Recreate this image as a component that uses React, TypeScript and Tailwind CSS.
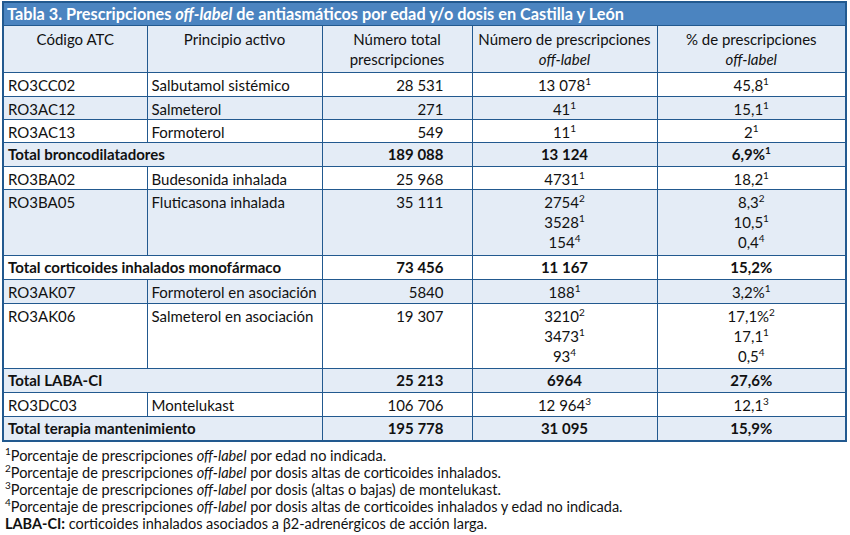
import React from "react";

const B = "border border-[#22598f]";

function Sup({ n }: { n: string }) {
  return <sup className="text-[10px] -top-[6px] leading-none">{n}</sup>;
}

type Row =
  | { kind: "item"; code: string; name: string; total: string; nums: [string, string][]; pcts: [string, string][]; light: boolean; h: string }
  | { kind: "total"; label: string; total: string; num: string; pct: [string, string]; light: boolean };

const rows: Row[] = [
  { kind: "item", code: "RO3CC02", name: "Salbutamol sistémico", total: "28 531", nums: [["13 078", "1"]], pcts: [["45,8", "1"]], light: false, h: "h-[24px]" },
  { kind: "item", code: "RO3AC12", name: "Salmeterol", total: "271", nums: [["41", "1"]], pcts: [["15,1", "1"]], light: true, h: "h-[23px]" },
  { kind: "item", code: "RO3AC13", name: "Formoterol", total: "549", nums: [["11", "1"]], pcts: [["2", "1"]], light: false, h: "h-[23px]" },
  { kind: "total", label: "Total broncodilatadores", total: "189 088", num: "13 124", pct: ["6,9%", "1"], light: true },
  { kind: "item", code: "RO3BA02", name: "Budesonida inhalada", total: "25 968", nums: [["4731", "1"]], pcts: [["18,2", "1"]], light: false, h: "h-[23px]" },
  { kind: "item", code: "RO3BA05", name: "Fluticasona inhalada", total: "35 111", nums: [["2754", "2"], ["3528", "1"], ["154", "4"]], pcts: [["8,3", "2"], ["10,5", "1"], ["0,4", "4"]], light: true, h: "h-[66px]" },
  { kind: "total", label: "Total corticoides inhalados monofármaco", total: "73 456", num: "11 167", pct: ["15,2%", ""], light: false },
  { kind: "item", code: "RO3AK07", name: "Formoterol en asociación", total: "5840", nums: [["188", "1"]], pcts: [["3,2%", "1"]], light: true, h: "h-[24px]" },
  { kind: "item", code: "RO3AK06", name: "Salmeterol en asociación", total: "19 307", nums: [["3210", "2"], ["3473", "1"], ["93", "4"]], pcts: [["17,1%", "2"], ["17,1", "1"], ["0,5", "4"]], light: false, h: "h-[65px]" },
  { kind: "total", label: "Total LABA-CI", total: "25 213", num: "6964", pct: ["27,6%", ""], light: true },
  { kind: "item", code: "RO3DC03", name: "Montelukast", total: "106 706", nums: [["12 964", "3"]], pcts: [["12,1", "3"]], light: false, h: "h-[24px]" },
  { kind: "total", label: "Total terapia mantenimiento", total: "195 778", num: "31 095", pct: ["15,9%", ""], light: true },
];

export default function App() {
  return (
    <div className="w-[850px] h-[535px] bg-white text-[#111] pt-[1px] pl-[2px]" style={{ fontFamily: "Lato, 'Open Sans', sans-serif" }}>
      <div className="w-[845px] border-2 border-[#22598f]">
        <div className="h-[23px] bg-[#4b84c0] text-white font-bold text-[16.3px] leading-[22px] pl-[3px] border-b border-[#22598f]">
          Tabla 3. Prescripciones <i>off-label</i> de antiasmáticos por edad y/o dosis en Castilla y León
        </div>
        <table className="w-full border-collapse table-fixed text-[15px] leading-[20px]">
          <colgroup>
            <col className="w-[143px]" />
            <col className="w-[175px]" />
            <col className="w-[150px]" />
            <col className="w-[185px]" />
            <col />
          </colgroup>
          <tbody>
            <tr className="bg-[#e4ecf6] h-[46px] align-top text-center">
              <td className={`${B} border-l-0 border-t-0 pt-[3px]`}>Código ATC</td>
              <td className={`${B} border-t-0 pt-[3px]`}>Principio activo</td>
              <td className={`${B} border-t-0 pt-[3px]`}>Número total<br />prescripciones</td>
              <td className={`${B} border-t-0 pt-[3px]`}>Número de prescripciones<br /><i>off-label</i></td>
              <td className={`${B} border-r-0 border-t-0 pt-[3px]`}>% de prescripciones<br /><i>off-label</i></td>
            </tr>
            {rows.map((r, i) => {
              const bg = r.light ? "bg-[#e4ecf6]" : "bg-white";
              const last = i === rows.length - 1 ? "border-b-0" : "";
              if (r.kind === "total") {
                return (
                  <tr key={i} className={`${bg} h-[24px] font-bold`}>
                    <td colSpan={2} className={`${B} border-l-0 ${last} px-[4px] text-left`}>{r.label}</td>
                    <td className={`${B} ${last} text-right pr-[28px]`}>{r.total}</td>
                    <td className={`${B} ${last} text-center`}>{r.num}</td>
                    <td className={`${B} border-r-0 ${last} text-center`}>{r.pct[0]}{r.pct[1] && <Sup n={r.pct[1]} />}</td>
                  </tr>
                );
              }
              return (
                <tr key={i} className={`${bg} ${r.h} align-top`}>
                  <td className={`${B} border-l-0 ${last} px-[4px] pt-[2px]`}>{r.code}</td>
                  <td className={`${B} ${last} px-[4px] pt-[2px]`}>{r.name}</td>
                  <td className={`${B} ${last} text-right pr-[28px] pt-[2px]`}>{r.total}</td>
                  <td className={`${B} ${last} text-center pt-[2px]`}>
                    {r.nums.map(([v, s], j) => (
                      <div key={j}>{v}<Sup n={s} /></div>
                    ))}
                  </td>
                  <td className={`${B} border-r-0 ${last} text-center pt-[2px]`}>
                    {r.pcts.map(([v, s], j) => (
                      <div key={j}>{v}<Sup n={s} /></div>
                    ))}
                  </td>
                </tr>
              );
            })}
          </tbody>
        </table>
      </div>
      <div className="pl-[3px] pt-[5px] text-[14.5px] leading-[17px]">
        <div><Sup n="1" />Porcentaje de prescripciones <i>off-label</i> por edad no indicada.</div>
        <div><Sup n="2" />Porcentaje de prescripciones <i>off-label</i> por dosis altas de corticoides inhalados.</div>
        <div><Sup n="3" />Porcentaje de prescripciones <i>off-label</i> por dosis (altas o bajas) de montelukast.</div>
        <div><Sup n="4" />Porcentaje de prescripciones <i>off-label</i> por dosis altas de corticoides inhalados y edad no indicada.</div>
        <div><b>LABA-CI:</b> corticoides inhalados asociados a β2-adrenérgicos de acción larga.</div>
      </div>
    </div>
  );
}
